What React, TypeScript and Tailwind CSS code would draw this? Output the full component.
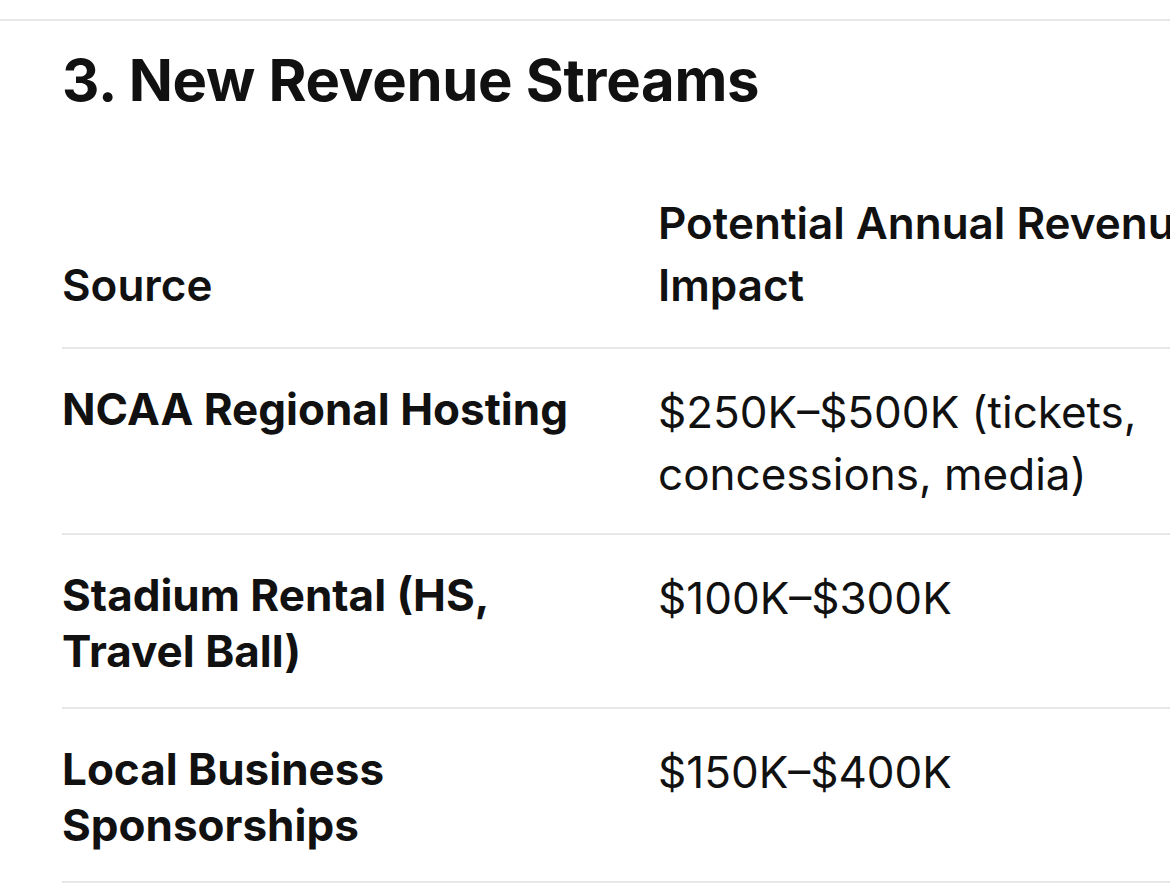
const rows = [
  { source: ["NCAA Regional Hosting"], impact: "$250K–$500K (tickets, concessions, media)" },
  { source: ["Stadium Rental (HS,", "Travel Ball)"], impact: "$100K–$300K" },
  { source: ["Local Business", "Sponsorships"], impact: "$150K–$400K" },
];

export default function App() {
  return (
    <div className="w-[1170px] h-[890px] overflow-hidden bg-white text-[#111111]" style={{ fontFamily: "Inter, 'Noto Sans', sans-serif" }}>
      <div className="pt-[19px]">
        <div className="border-t-2 border-[#e8e8e8]" />
      </div>
      <h2 className="pl-[62px] pt-[26px] text-[58px] font-bold leading-[66px] tracking-[-0.3px]">3. New Revenue Streams</h2>
      <div className="pl-[62px] pt-[79px]">
        <table className="border-collapse w-[1200px] text-[44px] leading-[62px]">
          <thead>
            <tr className="border-b-2 border-[#e8e8e8]">
              <th className="w-[596px] pr-[56px] pb-[31px] text-left align-bottom font-semibold">Source</th>
              <th className="pb-[31px] text-left align-bottom font-semibold">
                <div className="w-[560px]">Potential Annual Revenue Impact</div>
              </th>
            </tr>
          </thead>
          <tbody>
            {rows.map((r) => (
              <tr key={r.impact} className="border-b-2 border-[#e8e8e8]">
                <td className="pr-[56px] pt-[32px] pb-[28px] align-top font-bold leading-[56px]">
                  {r.source.map((s) => (
                    <div key={s}>{s}</div>
                  ))}
                </td>
                <td className="pt-[32px] pb-[28px] align-top">
                  <div className="w-[560px]">{r.impact}</div>
                </td>
              </tr>
            ))}
          </tbody>
        </table>
      </div>
    </div>
  );
}
